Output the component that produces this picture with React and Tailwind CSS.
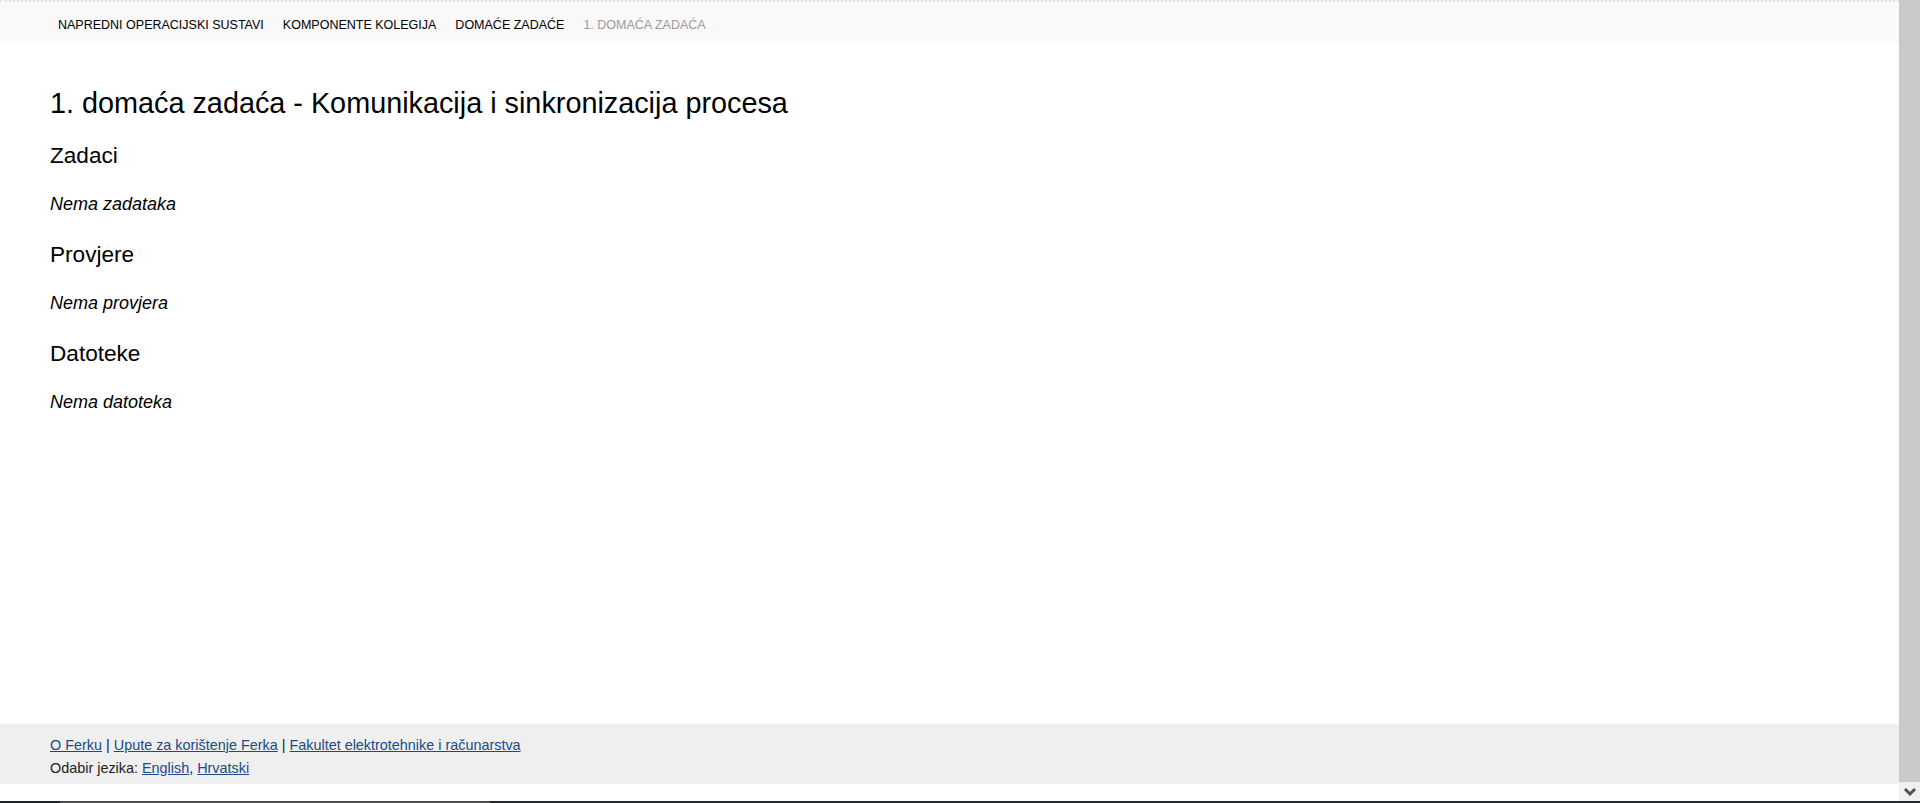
const crumbs = [
  { label: "NAPREDNI OPERACIJSKI SUSTAVI" },
  { label: "KOMPONENTE KOLEGIJA" },
  { label: "DOMAĆE ZADAĆE" },
  { label: "1. DOMAĆA ZADAĆA", current: true },
];

const sections = [
  { title: "Zadaci", empty: "Nema zadataka" },
  { title: "Provjere", empty: "Nema provjera" },
  { title: "Datoteke", empty: "Nema datoteka" },
];

function Breadcrumbs() {
  return (
    <nav className="flex h-[43px] shrink-0 items-center gap-[19px] border-t-2 border-dotted border-[#e2e2e2] bg-[#f9f9f9] pl-[58px] pt-[5px] text-[12.5px]">
      {crumbs.map((c) =>
        c.current ? (
          <span className="text-[#9a9a9a]" key={c.label}>
            {c.label}
          </span>
        ) : (
          <a className="text-black" href="#" key={c.label}>
            {c.label}
          </a>
        )
      )}
    </nav>
  );
}

function Footer() {
  return (
    <footer className="shrink-0 bg-[#efefef] pb-[5px] pl-[50px] pt-[10px] text-[14.4px] leading-[22.5px] text-[#222]">
      <div>
        <a className="text-[#1a4a88] underline" href="#">O Ferku</a> |{" "}
        <a className="text-[#1a4a88] underline" href="#">Upute za korištenje Ferka</a> |{" "}
        <a className="text-[#1a4a88] underline" href="#">Fakultet elektrotehnike i računarstva</a>
      </div>
      <div>
        Odabir jezika: <a className="text-[#1a4a88] underline" href="#">English</a>,{" "}
        <a className="text-[#1a4a88] underline" href="#">Hrvatski</a>
      </div>
    </footer>
  );
}

function Scrollbar() {
  return (
    <div className="flex w-[21px] shrink-0 flex-col bg-[#f0f0f0]">
      <div className="flex-1 bg-[#c9c9c9]" />
      <div className="flex h-[19px] items-center justify-center">
        <svg width="14" height="10" viewBox="0 0 14 10">
          <path d="M2 2 L7 7 L12 2" fill="none" stroke="#505050" strokeWidth="3" />
        </svg>
      </div>
    </div>
  );
}

export default function App() {
  return (
    <div className="flex h-[803px] flex-col overflow-hidden bg-white font-['Liberation_Sans',Arial,sans-serif]">
      <div className="flex min-h-0 flex-1">
        <div className="flex min-w-0 flex-1 flex-col">
          <Breadcrumbs />
          <main className="flex-1 pl-[50px] text-black">
            <h1 className="mt-[43px] text-[28.8px] leading-[34px]">
              1. domaća zadaća - Komunikacija i sinkronizacija procesa
            </h1>
            {sections.map((s, i) => (
              <section key={s.title}>
                <h2 className={`${i === 0 ? "mt-[22px]" : "mt-[26px]"} text-[22.6px] leading-[27px]`}>{s.title}</h2>
                <p className="mt-[25px] text-[18px] italic leading-[21px]">{s.empty}</p>
              </section>
            ))}
          </main>
          <Footer />
          <div className="h-[17px] shrink-0" />
        </div>
        <Scrollbar />
      </div>
      <div className="flex h-[2px] shrink-0 bg-[#23272a]">
        <div className="w-[60px] bg-[#1e2224]" />
        <div className="w-[430px] bg-[#4a4c4e]" />
        <div className="flex-1" />
      </div>
    </div>
  );
}
